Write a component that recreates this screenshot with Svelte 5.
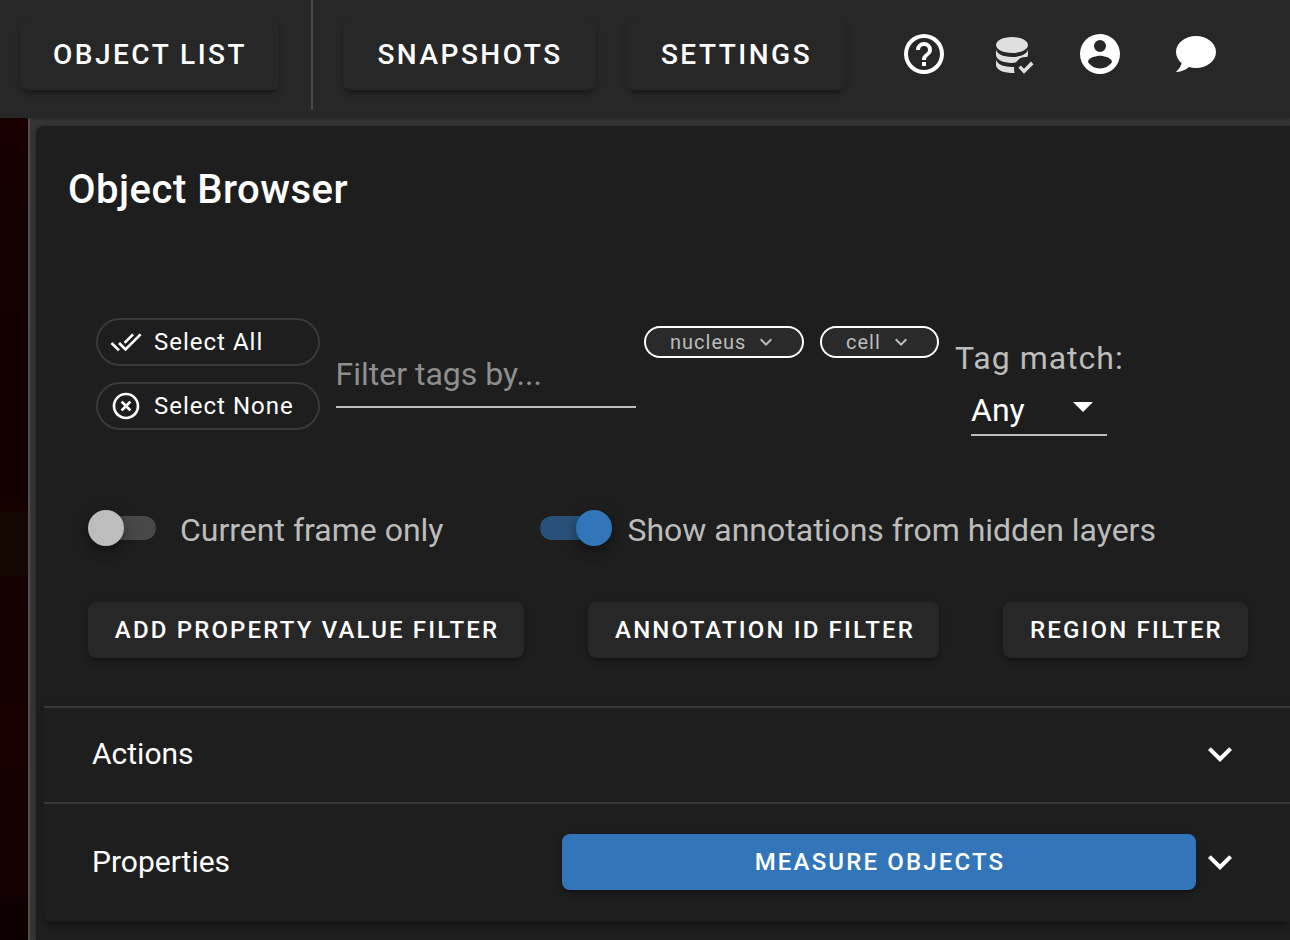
<script>
  const icons = {
    help: 'M11,18H13V16H11V18M12,2A10,10 0 0,0 2,12A10,10 0 0,0 12,22A10,10 0 0,0 22,12A10,10 0 0,0 12,2M12,20C7.59,20 4,16.41 4,12C4,7.59 7.59,4 12,4C16.41,4 20,7.59 20,12C20,16.41 16.41,20 12,20M12,6A4,4 0 0,0 8,10H10A2,2 0 0,1 12,8A2,2 0 0,1 14,10C14,12 11,11.75 11,15H13C13,12.75 16,12.5 16,10A4,4 0 0,0 12,6Z',
    database: 'M12,3C7.58,3 4,4.79 4,7C4,9.21 7.58,11 12,11C16.42,11 20,9.21 20,7C20,4.79 16.42,3 12,3M4,9V12C4,14.21 7.58,16 12,16C12.65,16 13.4,15.92 14.05,15.65A6,6 0 0,1 19.6,13.03L20,12V9C20,11.21 16.42,13 12,13C7.58,13 4,11.21 4,9M4,14V17C4,19.21 7.58,21 12,21L13.34,20.95A6,6 0 0,1 13.1,17.95L12,18C7.58,18 4,16.21 4,14M21.5,15.25L18,18.84L16.41,17.25L15.25,18.41L18,21.41L22.75,16.66L21.5,15.25Z',
    account: 'M12,19.2C9.5,19.2 7.29,17.92 6,16C6.03,14 10,12.9 12,12.9C14,12.9 17.97,14 18,16C16.71,17.92 14.5,19.2 12,19.2M12,5A3,3 0 0,1 15,8A3,3 0 0,1 12,11A3,3 0 0,1 9,8A3,3 0 0,1 12,5M12,2A10,10 0 0,0 2,12A10,10 0 0,0 12,22A10,10 0 0,0 22,12C22,6.47 17.5,2 12,2Z',
    chat: 'M12,3C17.5,3 22,6.58 22,11C22,15.42 17.5,19 12,19C10.76,19 9.57,18.82 8.47,18.5C5.55,21 2,21 2,21C4.33,18.67 4.7,17.1 4.75,16.5C3.05,15.07 2,13.13 2,11C2,6.58 6.5,3 12,3Z',
    checkAll: 'M0.41,13.41L6,19L7.41,17.58L1.83,12M22.24,5.58L11.66,16.17L7.5,12L6.07,13.41L11.66,19L23.66,7M18,7L16.59,5.58L10.24,11.93L11.66,13.34L18,7Z',
    close: 'M12,20C7.59,20 4,16.41 4,12C4,7.59 7.59,4 12,4C16.41,4 20,7.59 20,12C20,16.41 16.41,20 12,20M12,2C6.47,2 2,6.47 2,12C2,17.53 6.47,22 12,22C17.53,22 22,17.53 22,12C22,6.47 17.53,2 12,2M14.59,8L12,10.59L9.41,8L8,9.41L10.59,12L8,14.59L9.41,16L12,13.41L14.59,16L16,14.59L13.41,12L16,9.41L14.59,8Z',
    chevron: 'M7.41,8.58L12,13.17L16.59,8.58L18,10L12,16L6,10L7.41,8.58Z',
    menuDown: 'M7,10L12,15L17,10H7Z',
  };
</script>

{#snippet icon(name, size)}
  <svg class="icon" width={size} height={size} viewBox="0 0 24 24" aria-hidden="true"><path d={icons[name]} /></svg>
{/snippet}

<div class="app">
  <header>
    <button class="btn nav list">Object List</button>
    <span class="divider"></span>
    <button class="btn nav snapshots">Snapshots</button>
    <button class="btn nav settings">Settings</button>
    <div class="tools">
      {@render icon('help', 48)}
      <span class="saved">{@render icon('database', 48)}</span>
      {@render icon('account', 48)}
      <span class="chat">{@render icon('chat', 48)}</span>
    </div>
  </header>

  <div class="body">
    <div class="viewer"></div>
    <aside>
      <section class="card">
        <h1>Object Browser</h1>

        <div class="tags">
          <div class="selectors">
            <button class="pill">{@render icon('checkAll', 32)}<span>Select All</span></button>
            <button class="pill">{@render icon('close', 32)}<span>Select None</span></button>
          </div>
          <div class="filter">Filter tags by...</div>
          <div class="chips">
            <span class="chip nucleus"><span>nucleus</span>{@render icon('chevron', 24)}</span>
            <span class="chip cell"><span>cell</span>{@render icon('chevron', 24)}</span>
          </div>
          <div class="match">
            <div class="label">Tag match:</div>
            <div class="select"><span>Any</span>{@render icon('menuDown', 48)}</div>
          </div>
        </div>

        <div class="switches">
          <div class="switch first"><span class="track"><span class="thumb"></span></span><span class="text">Current frame only</span></div>
          <div class="switch on"><span class="track"><span class="thumb"></span></span><span class="text">Show annotations from hidden layers</span></div>
        </div>

        <div class="filters">
          <button class="btn small property">Add property value filter</button>
          <button class="btn small annotation">Annotation ID Filter</button>
          <button class="btn small region">Region Filter</button>
        </div>

        <div class="panels">
          <div class="panel actions"><span class="title">Actions</span>{@render icon('chevron', 48)}</div>
          <div class="panel properties">
            <span class="title">Properties</span>
            <button class="btn small measure">Measure objects</button>
            {@render icon('chevron', 48)}
          </div>
        </div>
      </section>
    </aside>
  </div>
</div>

<style>
  :global(body) { margin: 0; background: #1e1e1e; overflow: hidden; }
  .app { width: 1290px; height: 940px; overflow: hidden; display: flex; flex-direction: column; font-family: Roboto, sans-serif; color: #fff; box-sizing: border-box; }
  .app * { box-sizing: border-box; }
  .icon { display: block; flex: none; fill: currentColor; }
  header { height: 118px; flex: none; display: flex; align-items: flex-start; padding-left: 20px; background: #272727; box-shadow: 0 1px 3px #0004; position: relative; z-index: 1; }
  .btn { display: flex; align-items: center; justify-content: center; border: 0; border-radius: 8px; padding: 0 0 0 2px; flex: none; background: #272727; color: #fff; font-family: inherit; font-weight: 500; text-transform: uppercase; white-space: nowrap; box-shadow: 0 6px 2px -4px #0003, 0 4px 4px #00000024, 0 2px 10px #0000001a; }
  .nav { height: 72px; margin-top: 18px; padding-left: 1px; font-size: 28px; letter-spacing: 2.5px; box-shadow: 0 6px 2px -4px #0003, 0 4px 4px #00000024, 0 3px 8px #00000014; }
  .list { width: 259px; }
  .divider { width: 2px; height: 110px; margin: 0 30px 0 32px; background: #484848; }
  .snapshots { width: 253px; }
  .settings { width: 218px; margin-left: 31px; }
  .tools { display: flex; margin: 30px 0 0 55px; }
  .saved { margin: 1px 40px 0; color: #dfdfdf; }
  .chat { margin-left: 48px; }
  .body { flex: 1; display: flex; min-height: 0; }
  .viewer { width: 28px; flex: none; background: linear-gradient(#1b0000 0, #130000 100px, #120000 380px, #180000 393px, #120700 395px, #120700 457px, #140000 459px, #150000 585px, #1b0000 587px, #1b0000 650px, #150000 652px, #150000 778px, #0e0000 780px); }
  aside { flex: 1; min-width: 0; background: #363636; border-left: 2px solid #505050; padding: 8px 0 0 6px; }
  .card { height: 814px; background: #1e1e1e; border-top-left-radius: 8px; box-shadow: 0 0 7px #0004; padding-left: 8px; display: flex; flex-direction: column; }
  h1 { margin: 38px 0 0 24px; font-size: 40px; line-height: 52px; font-weight: 500; letter-spacing: .5px; height: 52px; }
  .tags { display: flex; align-items: flex-start; height: 132px; margin: 102px 0 0 52px; }
  .selectors { width: 224px; display: flex; flex-direction: column; gap: 16px; }
  .pill { height: 48px; display: flex; align-items: center; gap: 12px; padding: 0 12px; border: 2px solid #3a3a3a; border-radius: 24px; background: none; color: #fff; font: 400 24px Roboto, sans-serif; letter-spacing: 1px; }
  .filter { width: 300px; height: 90px; margin-left: 16px; padding-top: 36px; line-height: 40px; font-size: 32px; text-indent: -.5px; color: #8e8e8e; border-bottom: 2px solid #bcbcbc; white-space: nowrap; }
  .chips { display: flex; gap: 16px; margin: 8px 0 0 8px; }
  .chip { height: 32px; display: flex; align-items: center; border: 2px solid #fff; border-radius: 16px; background: #2a2a2a; padding-left: 24px; gap: 8px; font-size: 20px; letter-spacing: 1px; color: #bcbcbc; }
  .nucleus { width: 160px; }
  .cell { width: 119px; }
  .match { margin: 20px 0 0 16px; }
  .label { font-size: 32px; line-height: 40px; letter-spacing: 1px; color: #bcbcbc; }
  .select { width: 136px; height: 58px; margin-left: 16px; display: flex; justify-content: space-between; align-items: flex-start; font-size: 32px; line-height: 64px; border-bottom: 2px solid #bcbcbc; }
  .select .icon { margin-top: 4px; }
  .switches { display: flex; height: 40px; margin: 60px 0 0 44px; align-items: center; }
  .switch { display: flex; align-items: center; font-size: 32px; line-height: 40px; color: #bcbcbc; white-space: nowrap; }
  .first { width: 452px; }
  .track { width: 68px; height: 24px; display: flex; align-items: center; border-radius: 12px; background: #484848; margin: -4px 24px 0 0; flex: none; }
  .thumb { width: 36px; height: 36px; flex: none; border-radius: 50%; background: #bdbdbd; box-shadow: 0 4px 8px -2px #0003, 0 8px 10px #00000024, 0 2px 20px #0000001f; }
  .on .track { background: #295078; margin-right: 19.4px; justify-content: flex-end; }
  .on .thumb { background: #3375b9; margin-right: -4px; }
  .filters { display: flex; gap: 64px; margin: 52px 0 0 44px; }
  .small { height: 56px; font-size: 24px; letter-spacing: 2.16px; }
  .property { width: 436px; }
  .annotation { width: 351px; padding-left: 3px; }
  .region { width: 245px; }
  .panels { margin-top: 48px; height: 216px; border-bottom-left-radius: 8px; box-shadow: 0 6px 2px -4px #0003, 0 4px 4px #00000024, 0 2px 10px #0000001f; }
  .panel { display: flex; align-items: center; border-top: 2px solid #383838; padding: 0 46px 0 48px; font-size: 30px; }
  .actions { height: 96px; justify-content: space-between; padding-bottom: 2px; }
  .properties { height: 120px; padding-bottom: 2px; }
  .title { padding-bottom: 2px; }
  .properties .title { width: 470px; }
  .measure { width: 634px; background: #3375b9; }
</style>
